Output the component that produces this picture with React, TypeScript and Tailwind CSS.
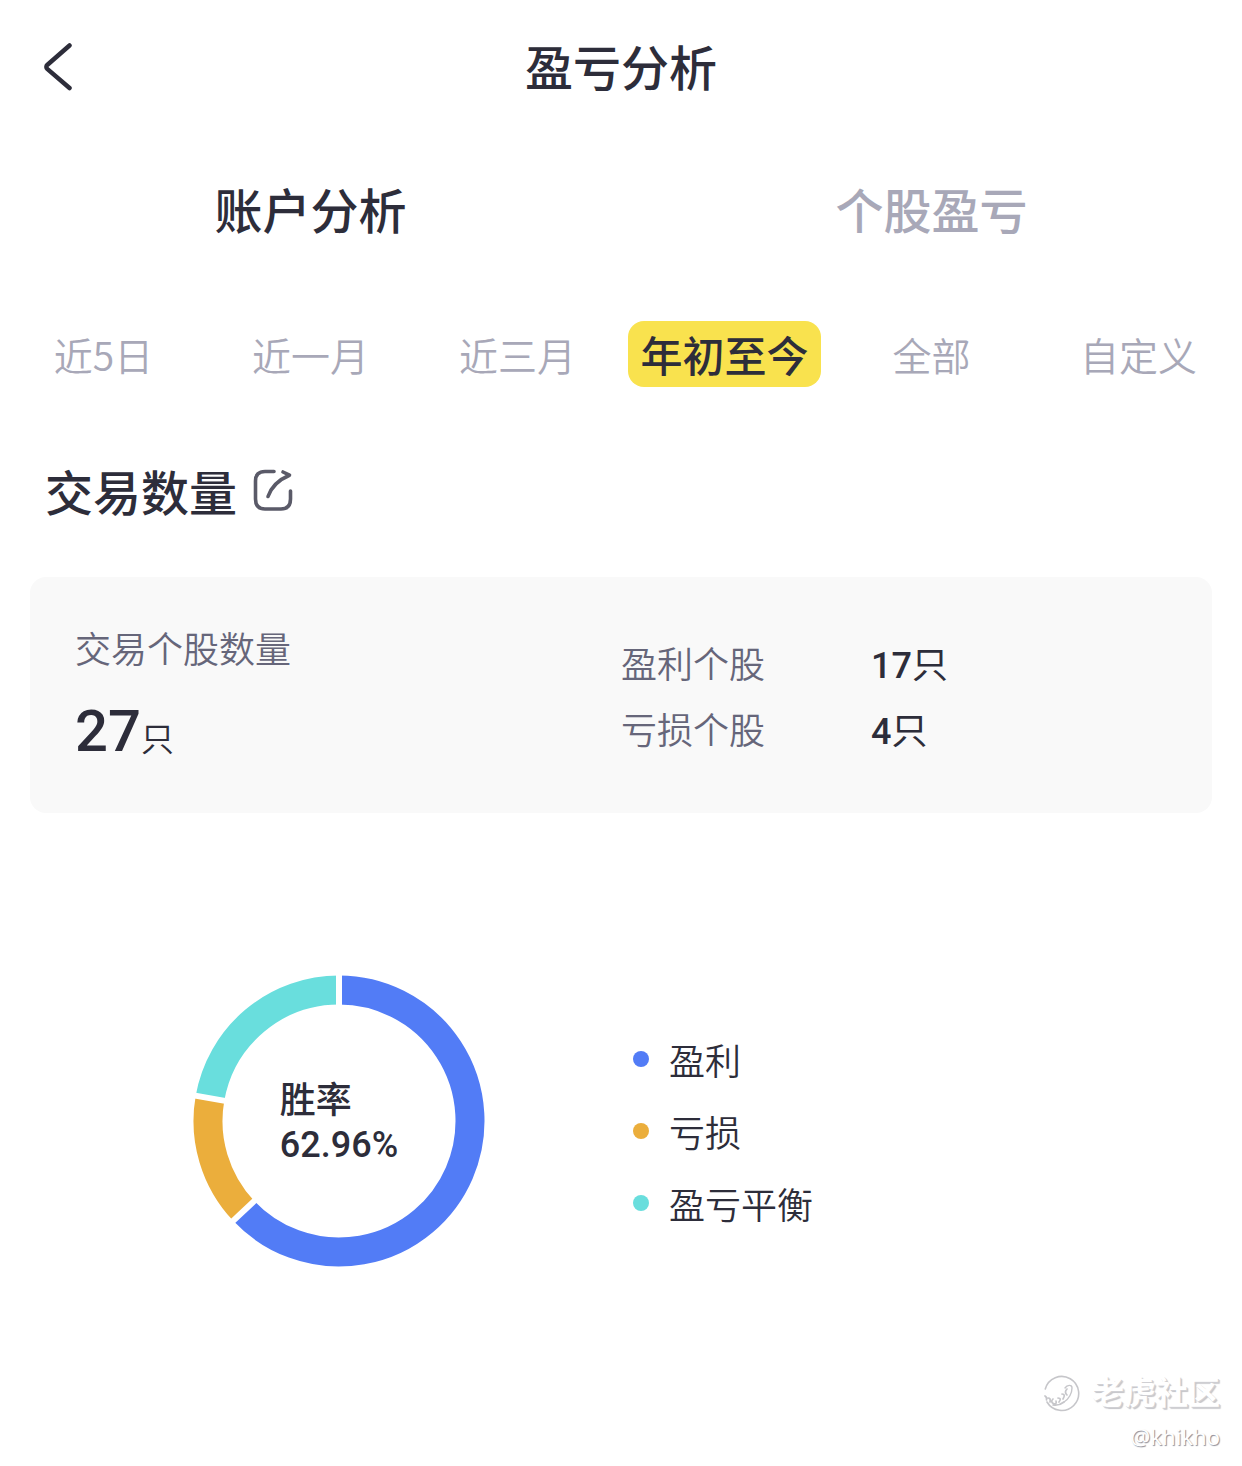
import { useState } from 'react'

const tabs = ['账户分析', '个股盈亏']
const periods = ['近5日', '近一月', '近三月', '年初至今', '全部', '自定义']

const total = 27

const slices = [
  { label: '盈利', count: 17, color: '#527cf6', dot: 'bg-[#527cf6]' },
  { label: '亏损', count: 4, color: '#ebae3c', dot: 'bg-[#ebae3c]' },
  { label: '盈亏平衡', count: 6, color: '#69dedd', dot: 'bg-[#69dedd]' },
]

const stats = [
  { label: '盈利个股', value: 17 },
  { label: '亏损个股', value: 4 },
]

const CENTER = 146
const RADIUS = 131

function point(fraction: number, radius: number) {
  const angle = fraction * Math.PI * 2
  return [CENTER + radius * Math.sin(angle), CENTER - radius * Math.cos(angle)]
}

function Donut() {
  let start = 0
  const arcs = slices.map((slice) => {
    const from = start
    start += slice.count / total
    return { ...slice, from, to: start }
  })

  return (
    <svg viewBox="0 0 292 292" className="w-full" aria-hidden="true">
      {arcs.map((arc) => {
        const [x1, y1] = point(arc.from, RADIUS)
        const [x2, y2] = point(arc.to, RADIUS)
        const large = arc.to - arc.from > 0.5 ? 1 : 0
        return (
          <path
            key={arc.label}
            d={`M${x1} ${y1}A${RADIUS} ${RADIUS} 0 ${large} 1 ${x2} ${y2}`}
            fill="none"
            stroke={arc.color}
            strokeWidth="29"
          />
        )
      })}
      {/* gaps between slices */}
      {arcs.map((arc) => {
        const [x1, y1] = point(arc.from, 110)
        const [x2, y2] = point(arc.from, 150)
        return <line key={arc.label} x1={x1} y1={y1} x2={x2} y2={y2} stroke="#fff" strokeWidth="6" />
      })}
    </svg>
  )
}

function Header() {
  return (
    <header className="grid grid-cols-[1fr_auto_1fr] items-center px-10 pt-[33px]">
      <button aria-label="返回" className="justify-self-start">
        <svg viewBox="0 0 36 52" className="h-13 w-9" fill="none" stroke="currentColor" strokeWidth="4.5" strokeLinecap="round" strokeLinejoin="round">
          <path d="M29.500 6.500 7.500 25.700Q5.200 27.900 7.500 30.100L29.500 49" />
        </svg>
      </button>
      <h1 className="text-5xl leading-16 font-medium">盈亏分析</h1>
    </header>
  )
}

function Watermark() {
  return (
    <footer className="flex flex-col items-end gap-1 pr-[22px] text-white">
      <div className="flex items-end gap-[10px]">
        <svg viewBox="0 0 40 40" className="size-10" fill="none" stroke="#c6c6ca" strokeLinecap="round">
          <path d="M3.300 15A17 17 0 1 1 5 28" strokeWidth="1.6" />
          <path d="M23 14C25 11 30 10 30 14C30 19 27 25 22 28" strokeWidth="1.4" />
          <path d="M3 22Q5 23 4.500 26M6 24Q9 24 8 28M11 25Q8 28 12 30Q15 30 14 27M16 24Q20 24 17 28M20 20Q24 20 21 25M25 15Q22 18 25 21M11 31Q17 32 22 28" strokeWidth="1.7" />
        </svg>
        <span className="text-[32px] leading-12 font-bold [text-shadow:1px_1px_0_#d0d0d4,2px_2px_1px_#c4c4c8]">老虎社区</span>
      </div>
      <span className="font-['Noto_Sans','Noto_Sans_CJK_SC',sans-serif] text-[22px] leading-9 [text-shadow:1px_1px_1px_#8c8c96]">
        @khikho
      </span>
    </footer>
  )
}

export default function App() {
  const [tab, setTab] = useState('账户分析')
  const [period, setPeriod] = useState('年初至今')

  return (
    <div className="bg-white font-['Noto_Sans_CJK_SC',sans-serif] text-[#2d2d3a]">
      <Header />

      <nav className="mt-[79px] grid grid-cols-2">
        {tabs.map((name) => (
          <button
            key={name}
            onClick={() => setTab(name)}
            className={`text-5xl leading-16 font-medium ${name === tab ? '' : 'text-[#a8a8b8]'}`}
          >
            {name}
          </button>
        ))}
      </nav>

      <div className="mt-[81px] grid grid-cols-6 justify-items-center">
        {periods.map((name) => (
          <button
            key={name}
            onClick={() => setPeriod(name)}
            className={
              name === period
                ? 'rounded-2xl bg-[#f9e24e] px-3 text-[42px] leading-[66px] font-medium whitespace-nowrap'
                : 'text-[39px] leading-[66px] font-[350] whitespace-nowrap text-[#a8a8b8]'
            }
          >
            {name}
          </button>
        ))}
      </div>

      <main>
        <div className="mt-[71px] flex items-center gap-4 px-[45px]">
          <h2 className="text-5xl leading-16 font-medium">交易数量</h2>
          <button aria-label="分享">
            <svg viewBox="0 0 40 44" className="h-11 w-10" fill="none" stroke="#5a5a68" strokeWidth="3.600" strokeLinecap="round" strokeLinejoin="round">
              <path d="M21 3.500H12Q2.500 3.500 2.500 13V31Q2.500 41 12 41H28Q37.500 41 37.500 31V23" />
              <path d="M15 28.500C18 20 24 12.500 36 7.500M30 4 36.500 7.200 33 9" />
            </svg>
          </button>
        </div>

        <section className="mx-[30px] mt-[55px] grid grid-cols-2 items-start rounded-2xl bg-[#f9f9f9] pt-10 pb-11">
          <div className="pl-[45px]">
            <p className="text-4xl leading-15 font-[350] text-[#66667a]">交易个股数量</p>
            <p className="mt-[22px] flex items-baseline leading-16">
              <span className="font-[Roboto,sans-serif] text-[58px] font-medium">{total}</span>
              <span className="text-[33px] font-[350]">只</span>
            </p>
          </div>
          <dl className="mt-3 grid auto-rows-[66px] grid-cols-[250px_auto] text-4xl leading-[66px]">
            {stats.map((stat) => (
              <div key={stat.label} className="contents">
                <dt className="font-[350] text-[#66667a]">{stat.label}</dt>
                <dd className="flex items-baseline">
                  <span className="font-[Roboto,sans-serif] font-medium">{stat.value}</span>
                  <span>只</span>
                </dd>
              </div>
            ))}
          </dl>
        </section>

        <section className="mt-[162px] grid grid-cols-2 items-center">
          <div className="relative ml-[193px] w-[292px]">
            <Donut />
            <div className="absolute inset-0 flex items-center justify-center text-4xl leading-12 font-medium">
              <div>
                <p>胜率</p>
                <p className="font-[Roboto,sans-serif]">62.96%</p>
              </div>
            </div>
          </div>
          <ul className="mt-5 ml-3 text-4xl leading-[72px] font-[350]">
            {slices.map((slice) => (
              <li key={slice.label} className="flex items-center gap-5">
                <span className={`size-4 rounded-full ${slice.dot}`} />
                {slice.label}
              </li>
            ))}
          </ul>
        </section>
      </main>

      <div className="mt-[99px] pb-2">
        <Watermark />
      </div>
    </div>
  )
}
